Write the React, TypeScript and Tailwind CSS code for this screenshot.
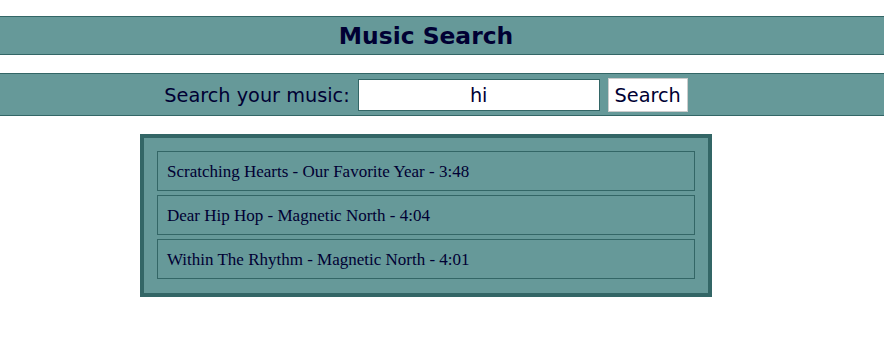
import React from "react";

const songs = [
  "Scratching Hearts - Our Favorite Year - 3:48",
  "Dear Hip Hop - Magnetic North - 4:04",
  "Within The Rhythm - Magnetic North - 4:01",
];

export default function App() {
  return (
    <div className="w-[884px] h-[351px] bg-white pt-[16px] text-[#000033]" style={{ fontFamily: '"DejaVu Sans", Verdana, sans-serif' }}>
      <div className="h-[39px] bg-[#669999] border-y border-[#336666] flex items-center justify-center pr-[32px] pt-[2px]">
        <h1 className="text-[23.4px] font-bold leading-none">Music Search</h1>
      </div>
      <div className="mt-[18px] h-[43px] bg-[#669999] border-y border-[#336666] flex items-center justify-center pr-[32px]">
        <span className="text-[19.3px] leading-none mr-[8px] pt-[2px]">Search your music:</span>
        <div className="w-[242px] h-[32px] bg-white border border-[#336666] flex items-center justify-center text-[19.3px] leading-none pt-[2px]">hi</div>
        <div className="ml-[8px] w-[80px] h-[34px] bg-white border border-[#cccccc] flex items-center justify-center text-[19.3px] leading-none pt-[2px]">Search</div>
      </div>
      <div className="flex justify-center pr-[32px] mt-[18px]">
        <div className="w-[572px] bg-[#669999] border-4 border-[#336666] px-[13px] pt-[13px] pb-[14px] flex flex-col gap-[4px]" style={{ fontFamily: '"Liberation Serif", "Times New Roman", serif' }}>
          {songs.map((s) => (
            <div key={s} className="h-[40px] border border-[#336666] flex items-center pl-[9px] pt-[2px] text-[17px]">
              {s}
            </div>
          ))}
        </div>
      </div>
    </div>
  );
}
